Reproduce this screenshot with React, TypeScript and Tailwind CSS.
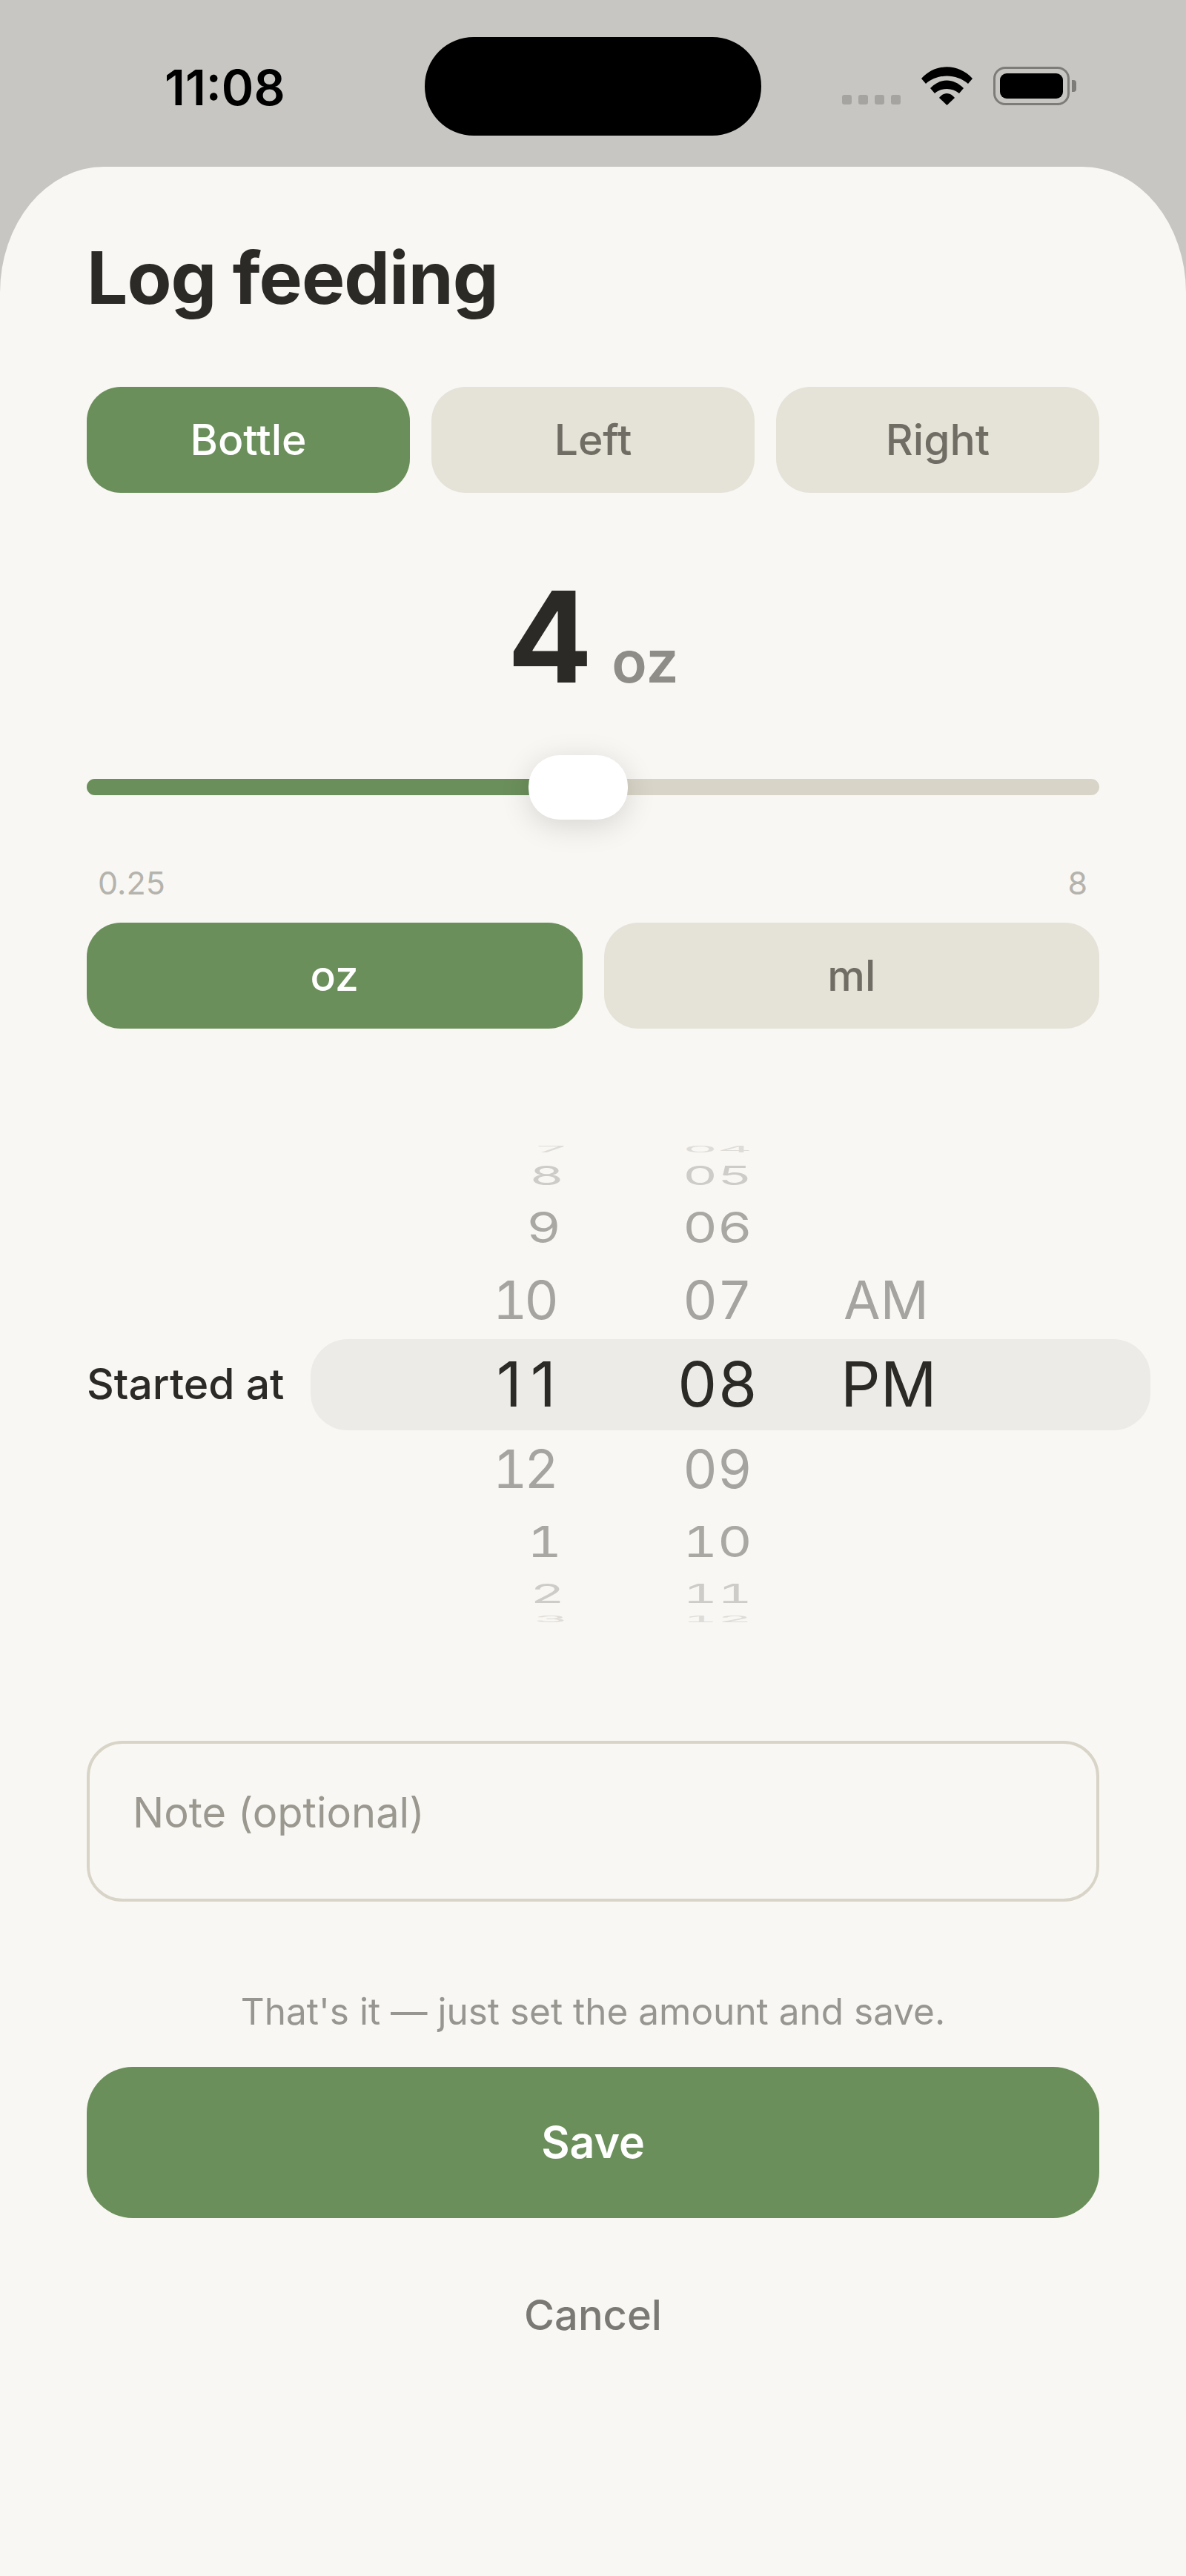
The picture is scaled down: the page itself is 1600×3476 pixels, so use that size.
const F = "[font-family:Inter,'Noto_Sans',sans-serif]";

const HEIGHTS = ["h-[12px]", "h-[58px]", "h-[82px]", "h-[114px]", "h-[114px]", "h-[114px]", "h-[82px]", "h-[58px]", "h-[12px]"];
const SCALES = ["scale-y-[0.16]", "scale-y-[0.5]", "scale-y-[0.8]", "scale-y-100", "scale-y-100", "scale-y-100", "scale-y-[0.8]", "scale-y-[0.5]", "scale-y-[0.16]"];
const COLORS = [
  "text-[72px] text-[#dedcd8] tabular-nums",
  "text-[72px] text-[#cdccc8] tabular-nums",
  "text-[72px] text-[#a9a8a3] tabular-nums",
  "text-[72px] text-[#a5a4a0] tabular-nums",
  "text-[84px] text-[#2c2a26] tabular-nums",
  "text-[72px] text-[#a5a4a0] tabular-nums",
  "text-[72px] text-[#a9a8a3] tabular-nums",
  "text-[72px] text-[#cdccc8] tabular-nums",
  "text-[72px] text-[#dedcd8] tabular-nums",
];
const HOUR_COLORS = [
  COLORS[0],
  COLORS[1],
  COLORS[2],
  "text-[72px] text-[#a5a4a0] tabular-nums tracking-[-4px]",
  "text-[84px] text-[#2c2a26] tracking-[12px]",
  "text-[72px] text-[#a5a4a0] tabular-nums tracking-[-4px]",
  COLORS[6],
  COLORS[7],
  COLORS[8],
];

function Wheel({ items, w, rowCls, colors }: { items: string[]; w: string; rowCls: string[]; colors: string[] }) {
  return (
    <div className={`${w} flex flex-col`}>
      {items.map((t, i) => (
        <div key={i} className={`${HEIGHTS[i]} ${rowCls[i]} flex items-center overflow-hidden whitespace-nowrap`}>
          <span className={`${colors[i]} ${SCALES[i]} block leading-none`}>{t}</span>
        </div>
      ))}
    </div>
  );
}

const HOUR_ROWS = [
  "justify-end pr-[3px]",
  "justify-end pr-[9px]",
  "justify-end pr-[13px]",
  "justify-end pr-[20px]",
  "justify-end pr-[8px]",
  "justify-end pr-[20px]",
  "justify-end pr-[12px]",
  "justify-end pr-[8px]",
  "justify-end pr-[3px]",
];
const MIN_ROWS = Array(9).fill("justify-center");

function Seg({ on, children }: { on?: boolean; children: string }) {
  return (
    <div
      className={
        on
          ? "flex-1 h-[143px] rounded-[46px] bg-[#6b8f5a] text-white flex items-center justify-center text-[57px] font-medium"
          : "flex-1 h-[143px] rounded-[46px] bg-[#e5e3d8] text-[#6f6d64] flex items-center justify-center text-[57px] font-medium"
      }
    >
      {children}
    </div>
  );
}

export default function App() {
  return (
    <div className={`${F} w-[1600px] h-[3476px] bg-[#c7c6c2] overflow-hidden flex flex-col`}>
      {/* status bar */}
      <div className="h-[225px] shrink-0 flex items-start">
        <div className="w-[573px] pt-[82px] pl-[222px] text-[66px] leading-[72px] font-semibold text-black">11:08</div>
        <div className="mt-[50px] w-[454px] h-[133px] rounded-[66px] bg-black" />
        <div className="ml-[109px] mt-[90px] flex items-end h-[52px]">
          <div className="flex gap-[9px] mb-[1px] w-[79px]">
            <span className="w-[13px] h-[13px] rounded-[3px] bg-[#a5a4a0]" />
            <span className="w-[13px] h-[13px] rounded-[3px] bg-[#a5a4a0]" />
            <span className="w-[13px] h-[13px] rounded-[3px] bg-[#a5a4a0]" />
            <span className="w-[13px] h-[13px] rounded-[3px] bg-[#a5a4a0]" />
          </div>
          <svg className="ml-[28px]" width="69" height="52" viewBox="0 0 69 52">
            <path d="M0 16 L6 23 C22 9 47 9 63 23 L69 16 C50 -5 19 -5 0 16 Z" fill="#000" />
            <path d="M12 29 L18 36 C27 28 42 28 51 36 L57 29 C43 15 26 15 12 29 Z" fill="#000" />
            <path d="M24 42 L34.5 52 L45 42 C39 34 30 34 24 42 Z" fill="#000" />
          </svg>
          <div className="ml-[28px] w-[103px] h-[52px] rounded-[16px] border-[3px] border-[#7d7c78] p-[6px]">
            <div className="w-full h-full rounded-[9px] bg-black" />
          </div>
          <div className="ml-[3px] mb-[18px] w-[6px] h-[16px] rounded-r-[4px] bg-[#7d7c78]" />
        </div>
      </div>

      {/* sheet */}
      <div className="flex-1 bg-[#f8f7f3] rounded-tl-[140px_170px] rounded-tr-[140px_170px] px-[117px] flex flex-col">
        <div className="mt-[90px] text-[98px] leading-[120px] font-bold text-[#2c2a26] tracking-[-1px]">Log feeding</div>

        <div className="mt-[87px] flex gap-[29px]">
          <Seg on>Bottle</Seg>
          <Seg>Left</Seg>
          <Seg>Right</Seg>
        </div>

        <div className="mt-[124px] h-[140px] flex items-baseline justify-center">
          <span className="text-[170px] leading-[140px] font-bold text-[#2c2a26]">4</span>
          <span className="ml-[26px] text-[78px] leading-[100px] font-semibold text-[#8f8d88]">oz</span>
        </div>

        <div className="mt-[122px] relative h-[22px] rounded-full bg-[#d8d4c7]">
          <div className="h-full w-[640px] rounded-full bg-[#6b8f5a]" />
          <div className="absolute left-[596px] top-[-32px] w-[134px] h-[87px] rounded-[42px] bg-white shadow-[0_8px_40px_rgba(0,0,0,0.14)]" />
        </div>

        <div className="mt-[96px] pl-[15px] pr-[16px] flex justify-between text-[43px] leading-[44px] text-[#b5b3ad]">
          <span>0.25</span>
          <span>8</span>
        </div>

        <div className="mt-[32px] flex gap-[29px]">
          <Seg on>oz</Seg>
          <Seg>ml</Seg>
        </div>

        {/* picker */}
        <div className="mt-[157px] h-[646px] flex items-center mr-[-69px]">
          <div className="w-[302px] text-[57px] font-medium text-[#2c2a26] whitespace-nowrap">Started at</div>
          <div className="relative flex-1 h-full">
            <div className="absolute left-0 right-0 top-[262px] h-[123px] rounded-[50px] bg-[#ecebe7]" />
            <div className="relative flex h-full">
              <Wheel w="w-[351px]" rowCls={HOUR_ROWS} colors={HOUR_COLORS} items={["7", "8", "9", "10", "11", "12", "1", "2", "3"]} />
              <Wheel w="w-[180px] ml-[108px]" rowCls={MIN_ROWS} colors={COLORS} items={["04", "05", "06", "07", "08", "09", "10", "11", "12"]} />
              <div className="ml-[76px] flex flex-col items-start pt-[152px]">
                <div className="h-[114px] pl-[4px] flex items-center text-[72px] text-[#a5a4a0] leading-none">AM</div>
                <div className="h-[114px] flex items-center text-[84px] text-[#2c2a26] leading-none">PM</div>
              </div>
            </div>
          </div>
        </div>

        <div className="mt-[158px] h-[217px] rounded-[48px] border-[4px] border-[#d8d4c7] pl-[58px] pt-[58px] text-[56px] leading-[70px] text-[#9a988f]">Note (optional)</div>

        <div className="mt-[116px] text-center text-[49.5px] leading-[64px] text-[#989690]">That's it — just set the amount and save.</div>

        <div className="mt-[43px] h-[204px] rounded-[62px] bg-[#6b8f5a] text-white flex items-center justify-center text-[59px] font-semibold">Save</div>

        <div className="mt-[96px] text-center text-[56px] leading-[70px] font-medium text-[#7b7974]">Cancel</div>
      </div>
    </div>
  );
}
